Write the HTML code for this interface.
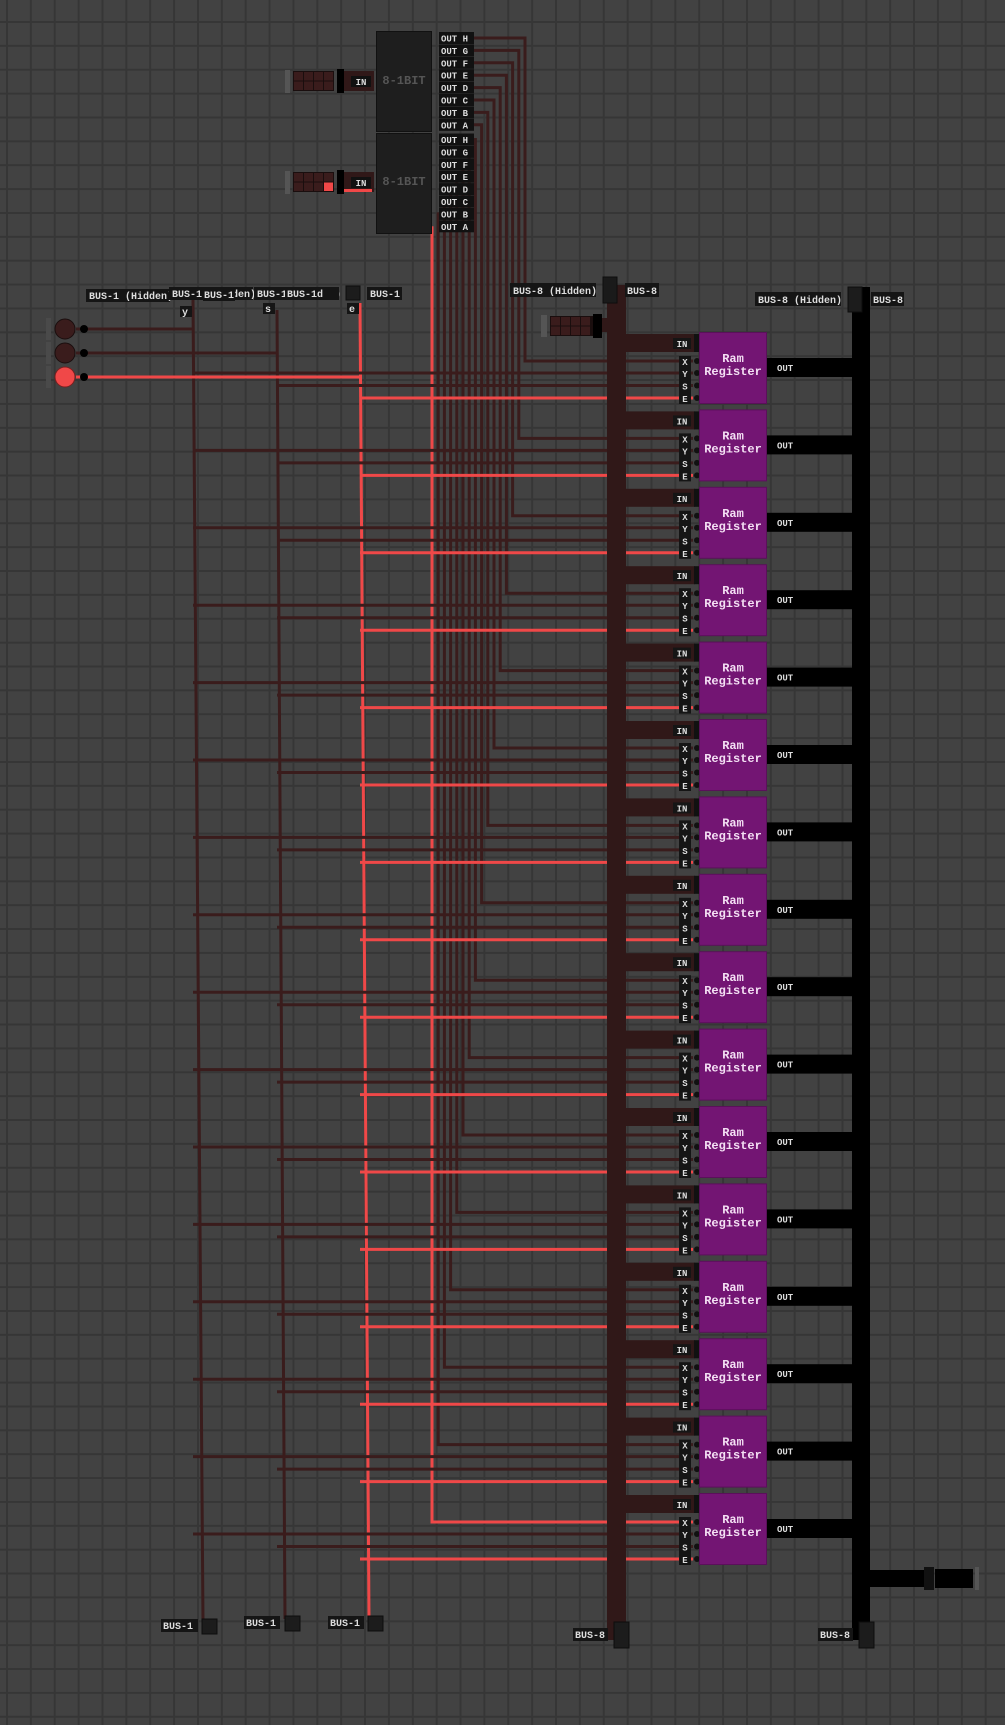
<!DOCTYPE html>
<html><head><meta charset="utf-8"><style>
html,body{margin:0;padding:0;background:#414141;}
svg{display:block}
text{font-family:"Liberation Mono",monospace;font-weight:bold;}
</style></head><body>
<svg width="1005" height="1725" viewBox="0 0 1005 1725" xmlns="http://www.w3.org/2000/svg">
<defs>
<pattern id="g" x="6" y="21" width="23.87" height="23.87" patternUnits="userSpaceOnUse">
<rect width="23.87" height="23.87" fill="#424242"/>
<rect width="2" height="23.87" fill="#363636"/><rect width="23.87" height="2" fill="#363636"/>
</pattern>
<g id="reg">
<path d="M193 41H693M277 53.5H693" stroke="#3a1c1c" stroke-width="3" fill="none"/>
<path d="M360 66H693" stroke="#f04848" stroke-width="3" fill="none"/>
<rect x="626" y="2" width="69" height="18" fill="#301818"/>
<rect x="694" y="2" width="5" height="18" fill="#111"/>
<rect x="673" y="6" width="18" height="11" fill="#151515"/>
<text x="682" y="15" font-size="9" fill="#ddd" text-anchor="middle">IN</text>
<rect x="679" y="24" width="12" height="48" fill="#151515"/>
<text x="685" y="33" font-size="9" fill="#ddd" text-anchor="middle">X</text>
<text x="685" y="45" font-size="9" fill="#ddd" text-anchor="middle">Y</text>
<text x="685" y="57.5" font-size="9" fill="#ddd" text-anchor="middle">S</text>
<text x="685" y="70" font-size="9" fill="#ddd" text-anchor="middle">E</text>
<circle cx="697" cy="29" r="3" fill="#111"/><circle cx="697" cy="41" r="3" fill="#111"/>
<circle cx="697" cy="53.5" r="3" fill="#111"/><circle cx="697" cy="66" r="3" fill="#111"/>
<rect x="699.5" y="0.5" width="67" height="71" fill="#731573" stroke="#5a105a"/>
<text x="733" y="30" font-size="12" fill="#f4e0f4" text-anchor="middle">Ram</text>
<text x="733" y="43" font-size="12" fill="#f4e0f4" text-anchor="middle">Register</text>
<rect x="767" y="26" width="86" height="19" fill="#000"/>
<text x="777" y="39" font-size="9" fill="#ddd">OUT</text>
</g>
</defs>
<rect width="1005" height="1725" fill="url(#g)"/>

<g stroke="#3a1c1c" stroke-width="3" fill="none">
<path d="M473 38H525V361H693"/>
<path d="M473 50.4H518.8V438.4H693"/>
<path d="M473 62.8H512.6V515.8H693"/>
<path d="M473 75.2H506.4V593.2H693"/>
<path d="M473 87.6H500.2V670.6H693"/>
<path d="M473 100H494V748H693"/>
<path d="M473 112.4H487.8V825.4H693"/>
<path d="M473 124.8H481.6V902.8H693"/>
<path d="M473 139.5H475.4V980.2H693"/>
<path d="M473 151.9H469.2V1057.6H693"/>
<path d="M473 164.3H463V1135H693"/>
<path d="M473 176.7H456.8V1212.4H693"/>
<path d="M473 189.1H450.6V1289.8H693"/>
<path d="M473 201.5H444.4V1367.2H693"/>
<path d="M473 213.9H438.2V1444.6H693"/>
</g>
<path d="M432 226.3V1522H693" stroke="#f04848" stroke-width="3" fill="none"/>

<path d="M193 300L203 1622M277 310L285 1619" stroke="#3a1c1c" stroke-width="3" fill="none"/>
<path d="M360 303L369 1619" stroke="#f04848" stroke-width="3" fill="none"/>

<use href="#reg" transform="translate(0,332)"/>
<use href="#reg" transform="translate(0,409.4)"/>
<use href="#reg" transform="translate(0,486.8)"/>
<use href="#reg" transform="translate(0,564.2)"/>
<use href="#reg" transform="translate(0,641.6)"/>
<use href="#reg" transform="translate(0,719)"/>
<use href="#reg" transform="translate(0,796.4)"/>
<use href="#reg" transform="translate(0,873.8)"/>
<use href="#reg" transform="translate(0,951.2)"/>
<use href="#reg" transform="translate(0,1028.6)"/>
<use href="#reg" transform="translate(0,1106)"/>
<use href="#reg" transform="translate(0,1183.4)"/>
<use href="#reg" transform="translate(0,1260.8)"/>
<use href="#reg" transform="translate(0,1338.2)"/>
<use href="#reg" transform="translate(0,1415.6)"/>
<use href="#reg" transform="translate(0,1493)"/>

<rect x="607" y="285" width="19" height="1355" fill="#301818"/>
<rect x="603" y="277" width="14" height="26" fill="#1a1a1a" stroke="#0d0d0d"/>
<rect x="852" y="287" width="18" height="1353" fill="#000"/>
<rect x="848" y="287" width="14" height="25" fill="#1c1c1c" stroke="#0d0d0d"/>
<rect x="870" y="1570" width="54" height="17" fill="#000"/>
<rect x="924" y="1567" width="10" height="23" fill="#111"/>
<rect x="935" y="1569" width="38" height="19" fill="#000"/>
<rect x="975" y="1567" width="4" height="23" fill="#555"/>

<rect x="541" y="315" width="6" height="22" fill="#555"/>
<rect x="550" y="316" width="43" height="20" fill="#1a0e0e"/>
<g fill="#3a1c1c">
<rect x="551" y="317" width="9" height="8.5"/><rect x="561" y="317" width="9" height="8.5"/><rect x="571" y="317" width="9" height="8.5"/><rect x="581" y="317" width="9" height="8.5"/>
<rect x="551" y="326.5" width="9" height="8.5"/><rect x="561" y="326.5" width="9" height="8.5"/><rect x="571" y="326.5" width="9" height="8.5"/><rect x="581" y="326.5" width="9" height="8.5"/>
</g>
<rect x="593" y="314" width="9" height="24" fill="#000"/>
<rect x="602" y="318" width="6" height="14" fill="#301818"/>

<rect x="376.5" y="31.5" width="55" height="100" fill="#1e1e1e" stroke="#111"/>
<rect x="376.5" y="133.5" width="55" height="100" fill="#1e1e1e" stroke="#111"/>
<text x="404" y="84" font-size="12" fill="#555" text-anchor="middle" font-weight="normal">8-1BIT</text>
<text x="404" y="185" font-size="12" fill="#555" text-anchor="middle" font-weight="normal">8-1BIT</text>
<g fill="#111">
<rect x="439" y="32" width="35" height="12"/><rect x="439" y="44.4" width="35" height="12"/><rect x="439" y="56.8" width="35" height="12"/><rect x="439" y="69.2" width="35" height="12"/>
<rect x="439" y="81.6" width="35" height="12"/><rect x="439" y="94" width="35" height="12"/><rect x="439" y="106.4" width="35" height="12"/><rect x="439" y="118.8" width="35" height="12"/>
<rect x="439" y="133.5" width="35" height="12"/><rect x="439" y="145.9" width="35" height="12"/><rect x="439" y="158.3" width="35" height="12"/><rect x="439" y="170.7" width="35" height="12"/>
<rect x="439" y="183.1" width="35" height="12"/><rect x="439" y="195.5" width="35" height="12"/><rect x="439" y="207.9" width="35" height="12"/><rect x="439" y="220.3" width="35" height="12"/>
</g>
<g font-size="9" fill="#ddd">
<text x="441" y="41.5">OUT H</text><text x="441" y="53.9">OUT G</text><text x="441" y="66.3">OUT F</text><text x="441" y="78.7">OUT E</text>
<text x="441" y="91.1">OUT D</text><text x="441" y="103.5">OUT C</text><text x="441" y="115.9">OUT B</text><text x="441" y="128.3">OUT A</text>
<text x="441" y="143">OUT H</text><text x="441" y="155.4">OUT G</text><text x="441" y="167.8">OUT F</text><text x="441" y="180.2">OUT E</text>
<text x="441" y="192.6">OUT D</text><text x="441" y="205">OUT C</text><text x="441" y="217.4">OUT B</text><text x="441" y="229.8">OUT A</text>
</g>

<g>
<rect x="285" y="70" width="5" height="23" fill="#555"/>
<rect x="293" y="71" width="41" height="20" fill="#1a0e0e"/>
<g fill="#3a1c1c">
<rect x="294" y="72" width="9" height="8.5"/><rect x="304" y="72" width="9" height="8.5"/><rect x="314" y="72" width="9" height="8.5"/><rect x="324" y="72" width="9" height="8.5"/>
<rect x="294" y="81.5" width="9" height="8.5"/><rect x="304" y="81.5" width="9" height="8.5"/><rect x="314" y="81.5" width="9" height="8.5"/><rect x="324" y="81.5" width="9" height="8.5"/>
</g>
<rect x="337" y="69" width="7" height="24" fill="#000"/>
<rect x="344" y="71" width="30" height="20" fill="#301818"/>
<rect x="351" y="76" width="20" height="11" fill="#111"/>
<text x="361" y="85" font-size="9" fill="#ddd" text-anchor="middle">IN</text>
</g>
<g>
<rect x="285" y="171" width="5" height="23" fill="#555"/>
<rect x="293" y="172" width="41" height="20" fill="#1a0e0e"/>
<g fill="#3a1c1c">
<rect x="294" y="173" width="9" height="8.5"/><rect x="304" y="173" width="9" height="8.5"/><rect x="314" y="173" width="9" height="8.5"/><rect x="324" y="173" width="9" height="8.5"/>
<rect x="294" y="182.5" width="9" height="8.5"/><rect x="304" y="182.5" width="9" height="8.5"/><rect x="314" y="182.5" width="9" height="8.5"/>
</g>
<rect x="324" y="182.5" width="9" height="8.5" fill="#f04848"/>
<rect x="337" y="170" width="7" height="24" fill="#000"/>
<rect x="344" y="172" width="30" height="20" fill="#301818"/>
<rect x="344" y="189" width="28" height="3" fill="#f04848"/>
<rect x="351" y="177" width="20" height="11" fill="#111"/>
<text x="361" y="186" font-size="9" fill="#ddd" text-anchor="middle">IN</text>
</g>

<rect x="46" y="318" width="5" height="22" fill="#4a4a4a"/>
<rect x="46" y="342" width="5" height="22" fill="#4a4a4a"/>
<rect x="46" y="366" width="5" height="22" fill="#4a4a4a"/>
<circle cx="65" cy="329" r="10" fill="#3a1c1c" stroke="#1a0e0e"/>
<circle cx="65" cy="353" r="10" fill="#3a1c1c" stroke="#1a0e0e"/>
<circle cx="65" cy="377" r="10" fill="#f04848" stroke="#7a2020"/>
<path d="M76 329H193M76 353H277" stroke="#3a1c1c" stroke-width="3"/>
<path d="M76 377H360" stroke="#f04848" stroke-width="3"/>
<circle cx="84" cy="329" r="4" fill="#000"/><circle cx="84" cy="353" r="4" fill="#000"/><circle cx="84" cy="377" r="4" fill="#000"/>

<g font-size="10" fill="#ddd" font-weight="normal">
<rect x="86" y="289" width="84" height="13" fill="#151515"/><text x="89" y="299">BUS-1 (Hidden)</text>
<rect x="169" y="287" width="84" height="13" fill="#151515"/><text x="172" y="297">BUS-1 (Hidden)</text>
<rect x="203" y="289" width="32" height="12" fill="#151515"/><text x="204" y="298">BUS-1</text>
<rect x="254" y="287" width="84" height="13" fill="#151515"/><text x="257" y="297">BUS-1 (Hidden)</text>
<rect x="285" y="287" width="54" height="13" fill="#151515"/><text x="287" y="297">BUS-1d</text>
<rect x="346" y="286" width="14" height="14" fill="#1c1c1c" stroke="#0d0d0d"/>
<rect x="367" y="287" width="35" height="13" fill="#151515"/><text x="370" y="297">BUS-1</text>
<rect x="180" y="306" width="12" height="11" fill="#151515"/><text x="182" y="315">y</text>
<rect x="263" y="303" width="12" height="11" fill="#151515"/><text x="265" y="312">s</text>
<rect x="347" y="303" width="12" height="11" fill="#151515"/><text x="349" y="312">e</text>
<rect x="510" y="283" width="86" height="14" fill="#151515"/><text x="513" y="294">BUS-8 (Hidden)</text>
<rect x="625" y="283" width="34" height="14" fill="#151515"/><text x="627" y="294">BUS-8</text>
<rect x="755" y="292" width="86" height="14" fill="#151515"/><text x="758" y="303">BUS-8 (Hidden)</text>
<rect x="871" y="292" width="33" height="14" fill="#151515"/><text x="873" y="303">BUS-8</text>
<rect x="161" y="1619" width="37" height="13" fill="#151515"/><text x="163" y="1629">BUS-1</text>
<rect x="202" y="1619" width="15" height="15" fill="#1c1c1c" stroke="#0d0d0d"/>
<rect x="244" y="1616" width="36" height="13" fill="#151515"/><text x="246" y="1626">BUS-1</text>
<rect x="285" y="1616" width="15" height="15" fill="#1c1c1c" stroke="#0d0d0d"/>
<rect x="328" y="1616" width="36" height="13" fill="#151515"/><text x="330" y="1626">BUS-1</text>
<rect x="368" y="1616" width="15" height="15" fill="#1c1c1c" stroke="#0d0d0d"/>
<rect x="573" y="1628" width="35" height="13" fill="#151515"/><text x="575" y="1638">BUS-8</text>
<rect x="614" y="1622" width="15" height="26" fill="#1c1c1c" stroke="#0d0d0d"/>
<rect x="818" y="1628" width="35" height="13" fill="#151515"/><text x="820" y="1638">BUS-8</text>
<rect x="859" y="1622" width="15" height="26" fill="#1c1c1c" stroke="#0d0d0d"/>
</g>
</svg>
</body></html>
